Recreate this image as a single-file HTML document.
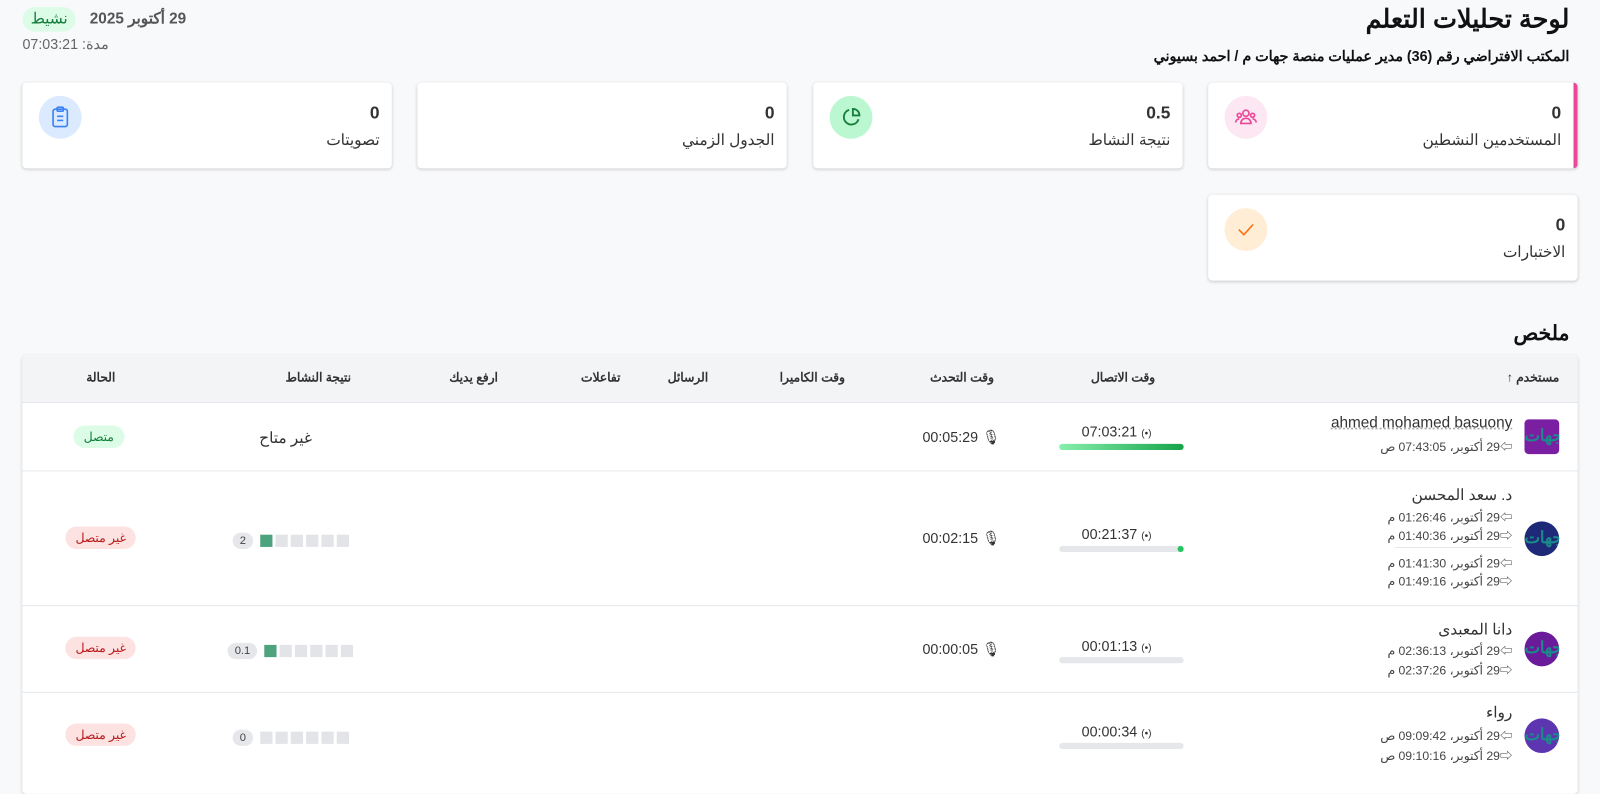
<!DOCTYPE html>
<html lang="ar"><head><meta charset="utf-8">
<style>
*{box-sizing:border-box;margin:0;padding:0}
html,body{width:1600px;height:773px;overflow:hidden;background:#f8f9fb}
body{font-family:"Liberation Sans","Noto Sans CJK SC",sans-serif;color:#222}
#w{position:absolute;left:0;top:0;width:1568px;height:758px;transform:scale(1.020408);transform-origin:0 0}
.a{position:absolute}
.r{direction:rtl}
.card{position:absolute;background:#fff;border-radius:4px;box-shadow:0 1px 3px rgba(0,0,0,.18);height:84px;width:362px}
.card .v{position:absolute;right:12px;top:20px;font-size:17px;font-weight:bold;color:#333}
.card .l{position:absolute;right:12px;top:47px;font-size:15px;color:#333;direction:rtl}
.ic{position:absolute;left:16px;top:13px;width:42px;height:42px;border-radius:50%;display:flex;align-items:center;justify-content:center}
.tbl{position:absolute;left:22px;top:348px;width:1524px;height:430px;background:#fff;box-shadow:0 1px 3px rgba(0,0,0,.15);border-radius:4px;overflow:hidden}
.th{position:absolute;top:0;height:44px;line-height:44px;font-size:12px;font-weight:bold;color:#333;direction:rtl}
.row{position:absolute;left:0;width:1524px;border-top:1px solid #e6e8ec}
.pill{position:absolute;border-radius:12px;font-size:12px;padding:0 10px;height:22px;line-height:22px;direction:rtl}
.off{background:#fde2e2;color:#b91c1c}
.on{background:#dcfce7;color:#15803d}
.bar{position:absolute;width:122px;height:6px;border-radius:3px;background:#e5e7eb}
.t{position:absolute;font-size:14px;color:#333}
.sm{position:absolute;font-size:12px;color:#444;direction:rtl}
.av{position:absolute;width:34px;height:34px;overflow:hidden;font-size:16px;font-weight:bold;color:#1a8a8a;line-height:34px;text-align:center}
.sq{display:inline-block;width:12px;height:12px;background:#e3e4e8;margin-left:3px;vertical-align:middle}
.sc{position:absolute;display:flex;align-items:center;direction:ltr}
.sc .b{background:#e5e7eb;border-radius:9px;font-size:11px;color:#444;padding:0 7px;height:16px;line-height:16px;margin-right:4px}
</style></head><body><div id="w">
<div class="a r" style="right:30px;top:4px;font-size:25px;font-weight:bold;color:#111">لوحة تحليلات التعلم</div>
<div class="a r" style="right:30px;top:47px;font-size:14px;font-weight:bold;color:#111">المكتب الافتراضي رقم (36) مدير عمليات منصة جهات م / احمد بسيوني</div>
<div class="a" style="left:22px;top:7px;height:24px;line-height:24px;background:#dcfce7;color:#15803d;border-radius:12px;padding:0 8px;font-size:15px">نشيط</div>
<div class="a r" style="left:88px;top:9px;font-size:15px;font-weight:bold;color:#555">29 أكتوبر 2025</div>
<div class="a r" style="left:22px;top:35px;font-size:14px;color:#666">مدة: 07:03:21</div>

<div class="card" style="left:1184px;top:81px;border-right:4px solid #ec4899"><div class="v">0</div><div class="l">المستخدمين النشطين</div>
<div class="ic" style="background:#fce7f3"><svg width="24" height="24" viewBox="0 0 24 24" fill="none" stroke="#ec4899" stroke-width="1.6"><circle cx="12" cy="8" r="3"/><circle cx="5.5" cy="10" r="2"/><circle cx="18.5" cy="10" r="2"/><path d="M7 18c0-3 2-5 5-5s5 2 5 5z M2 17c0-2 1.5-3.5 3.5-3.5 M22 17c0-2-1.5-3.5-3.5-3.5"/></svg></div></div>
<div class="card" style="left:797px;top:81px"><div class="v">0.5</div><div class="l">نتيجة النشاط</div>
<div class="ic" style="background:#bbf7d0"><svg width="22" height="22" viewBox="0 0 24 24" fill="none" stroke="#15803d" stroke-width="2"><path d="M20 14A8 8 0 1 1 10 4"/><path d="M14 3v7h7a7 7 0 0 0-7-7z"/></svg></div></div>
<div class="card" style="left:409px;top:81px"><div class="v">0</div><div class="l">الجدول الزمني</div></div>
<div class="card" style="left:22px;top:81px"><div class="v">0</div><div class="l">تصويتات</div>
<div class="ic" style="background:#dbeafe"><svg width="20" height="22" viewBox="0 0 20 22" fill="none" stroke="#3b82f6" stroke-width="1.6"><rect x="3" y="3" width="14" height="17" rx="2"/><rect x="7" y="1" width="6" height="4" rx="1"/><path d="M7 10h6M7 14h6"/></svg></div></div>
<div class="card" style="left:1184px;top:191px"><div class="v">0</div><div class="l">الاختبارات</div>
<div class="ic" style="background:#ffedd5"><svg width="20" height="20" viewBox="0 0 20 20" fill="none" stroke="#f97316" stroke-width="1.6"><path d="M3 10l5 5 9-10"/></svg></div></div>

<div class="a r" style="right:30px;top:314px;font-size:20px;font-weight:bold;color:#111">ملخص</div>

<div class="tbl">
<div style="position:absolute;left:0;top:0;width:1524px;height:46px;background:#f3f4f6"></div>
<div class="th" style="right:18px">مستخدم ↑</div>
<div class="th" style="right:414px">وقت الاتصال</div>
<div class="th" style="right:572px">وقت التحدث</div>
<div class="th" style="right:718px">وقت الكاميرا</div>
<div class="th" style="right:852px">الرسائل</div>
<div class="th" style="right:938px">تفاعلات</div>
<div class="th" style="right:1058px">ارفع يديك</div>
<div class="th" style="right:1202px">نتيجة النشاط</div>
<div class="th" style="right:1433px">الحالة</div>

<div class="row" style="top:46px;height:67px">
<div class="av" style="right:18px;top:16px;background:#7b1fa2;border-radius:4px">جهات</div>
<div class="t" style="right:64px;top:11px;font-size:15px;text-decoration:underline dotted #aaa">ahmed mohamed basuony</div>
<div class="sm" style="right:64px;top:34px">⇦29 أكتوبر، 07:43:05 ص</div>
<div class="t" style="left:1038px;top:20px">07:03:21 <span style="font-size:10px">(•)</span></div>
<div class="bar" style="left:1016px;top:40px;background:linear-gradient(90deg,#86efac,#16a34a)"></div>
<div class="t" style="left:882px;top:25px">00:05:29 🎙</div>
<div class="t" style="left:232px;top:25px;font-size:15px;direction:rtl">غير متاح</div>
<div class="pill on" style="left:50px;top:22px">متصل</div>
</div>

<div class="row" style="top:113px;height:132px">
<div class="av" style="right:18px;top:49px;background:#1e2a78;border-radius:50%">جهات</div>
<div class="t" style="right:64px;top:14px;font-size:15px;direction:rtl">د. سعد المحسن</div>
<div class="sm" style="right:64px;top:36px">⇦29 أكتوبر، 01:26:46 م</div>
<div class="sm" style="right:64px;top:54px">⇨29 أكتوبر، 01:40:36 م</div>
<div style="position:absolute;right:64px;top:74px;width:115px;border-top:1px solid #e5e7eb"></div>
<div class="sm" style="right:64px;top:81px">⇦29 أكتوبر، 01:41:30 م</div>
<div class="sm" style="right:64px;top:99px">⇨29 أكتوبر، 01:49:16 م</div>
<div class="t" style="left:1038px;top:53px">00:21:37 <span style="font-size:10px">(•)</span></div>
<div class="bar" style="left:1016px;top:73px"><div style="position:absolute;right:0;width:6px;height:6px;background:#22c55e;border-radius:3px"></div></div>
<div class="t" style="left:882px;top:57px">00:02:15 🎙</div>
<div class="sc" style="left:206px;top:60px"><span class="b">2</span><span class="sq" style="background:#4ca37e"></span><span class="sq"></span><span class="sq"></span><span class="sq"></span><span class="sq"></span><span class="sq"></span></div>
<div class="pill off" style="left:42px;top:54px">غير متصل</div>
</div>

<div class="row" style="top:245px;height:85px">
<div class="av" style="right:18px;top:25px;background:#6a1b9a;border-radius:50%">جهات</div>
<div class="t" style="right:64px;top:14px;font-size:15px;direction:rtl">دانا المعبدى</div>
<div class="sm" style="right:64px;top:35px">⇦29 أكتوبر، 02:36:13 م</div>
<div class="sm" style="right:64px;top:54px">⇨29 أكتوبر، 02:37:26 م</div>
<div class="t" style="left:1038px;top:31px">00:01:13 <span style="font-size:10px">(•)</span></div>
<div class="bar" style="left:1016px;top:50px"></div>
<div class="t" style="left:882px;top:34px">00:00:05 🎙</div>
<div class="sc" style="left:201px;top:36px"><span class="b">0.1</span><span class="sq" style="background:#4ca37e"></span><span class="sq"></span><span class="sq"></span><span class="sq"></span><span class="sq"></span><span class="sq"></span></div>
<div class="pill off" style="left:42px;top:30px">غير متصل</div>
</div>

<div class="row" style="top:330px;height:100px">
<div class="av" style="right:18px;top:25px;background:#5e35b1;border-radius:50%">جهات</div>
<div class="t" style="right:64px;top:10px;font-size:15px;direction:rtl">رواء</div>
<div class="sm" style="right:64px;top:33px">⇦29 أكتوبر، 09:09:42 ص</div>
<div class="sm" style="right:64px;top:53px">⇨29 أكتوبر، 09:10:16 ص</div>
<div class="t" style="left:1038px;top:30px">00:00:34 <span style="font-size:10px">(•)</span></div>
<div class="bar" style="left:1016px;top:49px"></div>
<div class="sc" style="left:206px;top:36px"><span class="b">0</span><span class="sq"></span><span class="sq"></span><span class="sq"></span><span class="sq"></span><span class="sq"></span><span class="sq"></span></div>
<div class="pill off" style="left:42px;top:30px">غير متصل</div>
</div>
</div>
</div></body></html>
